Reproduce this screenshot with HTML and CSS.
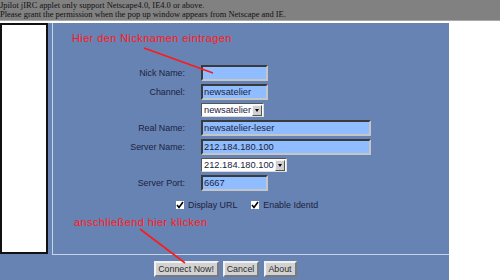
FILE: index.html
```html
<!DOCTYPE html>
<html>
	<head>
		<meta charset="UTF-8">
		<title>jIRC</title>
		<link rel="stylesheet" href="styles.css">
	</head>
	<body>
		<div class="notice">
			<p>Jpilot jIRC applet only support Netscape4.0, IE4.0 or above.</p>
			<p>Please grant the permission when the pop up window appears from Netscape and IE.</p>
		</div>
		<div class="rule"></div>
		<div class="applet">
			<div class="top">
				<div class="list"></div>
				<div class="panel">
					<div class="form">
						<label>Nick Name:</label>
						<div class="field short"></div>
						<label>Channel:</label>
						<div class="field short">newsatelier</div>
						<span></span>
						<div class="select small"><span class="val">newsatelier</span><span class="arrow"></span></div>
						<label>Real Name:</label>
						<div class="field long">newsatelier-leser</div>
						<label>Server Name:</label>
						<div class="field long">212.184.180.100</div>
						<span></span>
						<div class="select wide"><span class="val">212.184.180.100</span><span class="arrow"></span></div>
						<label>Server Port:</label>
						<div class="field short">6667</div>
					</div>
					<div class="checks">
						<span class="check"><i class="box"><svg width="8" height="8" viewBox="0 0 8 8"><path d="M1 4 L3 6.5 L7 1" fill="none" stroke="#000" stroke-width="1.6"/></svg></i>Display URL</span>
						<span class="check"><i class="box"><svg width="8" height="8" viewBox="0 0 8 8"><path d="M1 4 L3 6.5 L7 1" fill="none" stroke="#000" stroke-width="1.6"/></svg></i>Enable Identd</span>
					</div>
				</div>
			</div>
			<div class="buttons">
				<span class="btn connect">Connect Now!</span>
				<span class="btn cancel">Cancel</span>
				<span class="btn about">About</span>
			</div>
			<!-- rote Hinweise -->
			<span class="note note1">Hier den Nicknamen eintragen</span>
			<span class="note note2">anschließend hier klicken</span>
			<svg class="arrows" width="449" height="257">
				<line x1="144" y1="25" x2="213" y2="50" stroke="#ff1a1a" stroke-width="1.6"/>
				<line x1="140" y1="206" x2="185" y2="240" stroke="#ff1a1a" stroke-width="1.6"/>
			</svg>
		</div>
	</body>
</html>
```
FILE: styles.css
```css
*{
	padding:0;
	margin:0;
	box-sizing:border-box;
}
body{
	background:#fff;
	width:500px;
	height:280px;
	overflow:hidden;
}
.notice{
	height:20px;
	background:#818181;
	font-family:"Liberation Serif",serif;
	font-size:8.45px;
	line-height:9px;
	color:#111;
	padding-top:1px;
}
.rule{
	height:1px;
	background:#a9a9a9;
	margin-bottom:2px;
}
.applet{
	width:449px;
	height:257px;
	background:#6683b3;
	position:relative;
	font-family:"Liberation Sans",Arial,sans-serif;
	color:#1c2240;
}
.top{
	display:flex;
	height:232px;
}
.list{
	width:48px;
	height:231px;
	background:#fff;
	border:2px solid #111;
}
.panel{
	flex:1;
	margin-left:4px;
	border-left:1px solid #c9d3e6;
	border-bottom:1px solid #c9d3e6;
	padding-top:42px;
}
.form{
	display:grid;
	grid-template-columns:132px auto;
	column-gap:16px;
	row-gap:3px;
	justify-items:start;
	align-items:center;
}
.form label{
	justify-self:end;
	font-size:8.9px;
}
.field{
	height:16px;
	background:#8fbdff;
	border:2px solid;
	border-color:#3a3a3a #c6c6c6 #c6c6c6 #3a3a3a;
	font-size:9.3px;
	line-height:12px;
	padding-left:1px;
	color:#1c2240;
}
.short{
	width:67px;
}
.long{
	width:170px;
}
.select{
	height:14px;
	background:#fff;
	border:1px solid;
	border-color:#555 #ddd #ddd #555;
	display:flex;
	align-items:center;
	justify-content:space-between;
	font-size:9.3px;
	color:#1c2240;
	padding:0 1px 0 2px;
}
.small{
	width:63px;
}
.wide{
	width:86px;
}
.arrow{
	width:10px;
	height:11px;
	background:#d0d0d0;
	border:1px solid;
	border-color:#f4f4f4 #555 #555 #f4f4f4;
	position:relative;
}
.arrow:after{
	content:"";
	position:absolute;
	left:2px;
	top:3px;
	border-left:2.5px solid transparent;
	border-right:2.5px solid transparent;
	border-top:3px solid #000;
}
.checks{
	display:flex;
	gap:14px;
	padding-left:123px;
	margin-top:9px;
	font-size:8.9px;
}
.check{
	display:flex;
	align-items:center;
	gap:4px;
}
.box{
	width:8px;
	height:8px;
	background:#fff;
	display:flex;
}
.buttons{
	display:flex;
	justify-content:center;
	gap:4px;
	padding-top:6px;
	padding-left:1px;
}
.btn{
	height:16px;
	background:#d2d2d2;
	border:2px solid;
	border-color:#f2f2f2 #7a7a7a #7a7a7a #f2f2f2;
	font-size:8.9px;
	line-height:12px;
	text-align:center;
	color:#2a2a2a;
}
.connect{
	width:65px;
}
.cancel{
	width:36px;
}
.about{
	width:33px;
	margin-left:1px;
}
.note{
	position:absolute;
	font-size:11px;
	letter-spacing:0.4px;
	line-height:11px;
	color:#ff1a1a;
}
.note1{
	left:72px;
	top:10px;
}
.note2{
	left:74px;
	top:194px;
}
.arrows{
	position:absolute;
	left:0;
	top:0;
	pointer-events:none;
}
```
